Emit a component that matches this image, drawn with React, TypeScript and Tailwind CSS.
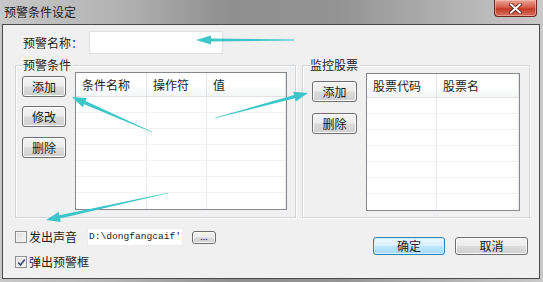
import React from "react";

const FONT = "font-['Noto_Sans_CJK_SC','Noto_Sans',sans-serif]";

function arrowPts(tx: number, ty: number, hx: number, hy: number, w0: number, w1: number, L: number, H: number) {
  const dx = hx - tx;
  const dy = hy - ty;
  const len = Math.hypot(dx, dy);
  const ux = dx / len;
  const uy = dy / len;
  const nx = -uy;
  const ny = ux;
  const bx = hx - ux * L;
  const by = hy - uy * L;
  const p = (x: number, y: number) => `${x.toFixed(1)},${y.toFixed(1)}`;
  return [
    p(tx + (nx * w0) / 2, ty + (ny * w0) / 2),
    p(bx + (nx * w1) / 2, by + (ny * w1) / 2),
    p(bx + nx * H, by + ny * H),
    p(hx, hy),
    p(bx - nx * H, by - ny * H),
    p(bx - (nx * w1) / 2, by - (ny * w1) / 2),
    p(tx - (nx * w0) / 2, ty - (ny * w0) / 2),
  ].join(" ");
}

function Btn({ children, className = "" }: { children: React.ReactNode; className?: string }) {
  return (
    <div
      className={`flex items-center justify-center rounded-[3px] border border-[#707070] bg-[linear-gradient(#f4f4f4,#ececec_48%,#dcdcdc_52%,#cfcfcf)] text-[12px] leading-none text-[#1a1a1a] shadow-[inset_0_0_0_1px_#fbfbfb] ${className}`}
    >
      {children}
    </div>
  );
}

function CheckBox({ checked }: { checked?: boolean }) {
  return (
    <div className="flex h-[12px] w-[12px] items-center justify-center border border-[#8e8f8f] bg-[linear-gradient(135deg,#dcdcdc,#f6f6f6)] shadow-[inset_0_0_0_1px_#f4f4f4]">
      {checked && (
        <svg width="9" height="9" viewBox="0 0 9 9">
          <path d="M1.2 4.6 L3.5 7 L7.8 1.5" fill="none" stroke="#3c4d78" strokeWidth="1.7" />
        </svg>
      )}
    </div>
  );
}

function Table({ cols, rows, width }: { cols: { label: string; w: number }[]; rows: number; width: number }) {
  return (
    <div className="border border-[#86898f] bg-white" style={{ width }}>
      <div className="flex h-[24px] border-b border-[#e2e2e2] bg-[linear-gradient(#ffffff,#ffffff_50%,#f4f5f6)]">
        {cols.map((c, i) => (
          <div
            key={i}
            className="flex items-center border-r border-[#e3e4e6] pl-[6px] text-[12px] text-[#1e1e1e]"
            style={{ width: c.w }}
          >
            {c.label}
          </div>
        ))}
      </div>
      {Array.from({ length: rows }).map((_, r) => (
        <div key={r} className="flex h-[16px] border-b border-[#f1f1f1] last:border-b-0">
          {cols.map((c, i) => (
            <div key={i} className="border-r border-[#ebebeb]" style={{ width: c.w }} />
          ))}
        </div>
      ))}
    </div>
  );
}

function Group({ title, className = "", children }: { title: string; className?: string; children: React.ReactNode }) {
  return (
    <div
      className={`relative h-[153px] border border-[#d3d6d9] shadow-[inset_1px_1px_0_#ffffff,1px_1px_0_#ffffff] ${className}`}
    >
      <span className="absolute -top-[9px] left-[7px] bg-[#f0f0f0] pr-[2px] text-[12px] leading-[16px] text-[#1e1e1e]">
        {title}
      </span>
      {children}
    </div>
  );
}

export default function App() {
  const teal = "#3cc6c9";
  return (
    <div
      className={`relative h-[282px] w-[543px] overflow-hidden bg-[linear-gradient(to_right,#c8c8c8,#b2b2b2_22%,#8f8f8f_42%,#939393_62%,#adadad_80%,#c9c9c9)] ${FONT}`}
    >
      {/* title bar */}
      <div className="flex h-[24px] items-start justify-between">
        <div className="pl-[4px] pt-[3px] text-[12px] leading-[17px] text-[#202020]">预警条件设定</div>
        <div className="mr-[6px] flex h-[17px] w-[43px] items-center justify-center rounded-b-[4px] border border-t-0 border-[#6a2a22] bg-[linear-gradient(#eaa597,#d65d49_45%,#c23b27_55%,#d4725e)] shadow-[inset_0_0_0_1px_rgba(255,200,190,0.5)]">
          <svg width="13" height="11" viewBox="0 0 13 11">
            <path d="M2 1.5 L11 9.5 M11 1.5 L2 9.5" stroke="#5a1c14" strokeWidth="3.6" strokeLinecap="square" />
            <path d="M2 1.5 L11 9.5 M11 1.5 L2 9.5" stroke="#ffffff" strokeWidth="2" strokeLinecap="square" />
          </svg>
        </div>
      </div>

      {/* client area */}
      <div className="ml-[2px] flex h-[255px] w-[538px] flex-col border border-[#4a4a4a] bg-[#f0f0f0] text-[12px] text-[#1e1e1e]">
        {/* name row */}
        <div className="flex items-center pl-[20px] pt-[6px]">
          <div className="w-[66px] text-[12px]">预警名称：</div>
          <div className="h-[23px] w-[134px] border border-[#e0e0e0] bg-white" />
        </div>

        {/* groups */}
        <div className="mt-[11px] flex gap-[6px] pl-[12px]">
          <Group title="预警条件" className="w-[281px]">
            <div className="flex gap-[9px] pl-[6px] pt-[6px]">
              <div className="flex flex-col pt-[4px]">
                <Btn className="h-[21px] w-[44px]">添加</Btn>
                <Btn className="mt-[9px] h-[21px] w-[44px]">修改</Btn>
                <Btn className="mt-[10px] h-[21px] w-[44px]">删除</Btn>
              </div>
              <Table
                width={212}
                rows={7}
                cols={[
                  { label: "条件名称", w: 71 },
                  { label: "操作符", w: 60 },
                  { label: "值", w: 79 },
                ]}
              />
            </div>
          </Group>
          <Group title="监控股票" className="w-[228px]">
            <div className="flex gap-[9px] pl-[9px] pt-[7px]">
              <div className="flex flex-col pt-[8px]">
                <Btn className="h-[21px] w-[45px]">添加</Btn>
                <Btn className="mt-[11px] h-[21px] w-[45px]">删除</Btn>
              </div>
              <Table
                width={154}
                rows={7}
                cols={[
                  { label: "股票代码", w: 70 },
                  { label: "股票名", w: 82 },
                ]}
              />
            </div>
          </Group>
        </div>

        {/* bottom */}
        <div className="mt-[10px] flex justify-between pl-[12px] pr-[11px]">
          <div className="flex flex-col">
            <div className="flex h-[18px] items-center">
              <CheckBox />
              <span className="ml-[2px] w-[50px]">发出声音</span>
              <div className="ml-[8px] flex h-[18px] w-[96px] items-center overflow-hidden border border-[#ececec] bg-white pl-[1px] font-['Liberation_Mono',monospace] text-[9.6px] text-[#222] whitespace-nowrap">
                D:\dongfangcaif'
              </div>
              <Btn className="ml-[9px] h-[13px] w-[24px] !text-[9px] !leading-[6px]">...</Btn>
            </div>
            <div className="mt-[7px] flex h-[18px] items-center">
              <CheckBox checked />
              <span className="ml-[2px]">弹出预警框</span>
            </div>
          </div>
          <div className="flex gap-[10px] pt-[9px]">
            <div className="flex h-[18px] w-[72px] items-center justify-center rounded-[3px] border border-[#3c7fb1] bg-[linear-gradient(#eaf6fd,#d9f0fc_48%,#bee6fd_52%,#a7d9f5)] text-[12px] leading-none shadow-[inset_0_0_0_1px_#cdeefc]">
              确定
            </div>
            <Btn className="h-[18px] w-[73px]">取消</Btn>
          </div>
        </div>
      </div>

      {/* annotation arrows */}
      <svg className="pointer-events-none absolute left-0 top-0" width="543" height="282" viewBox="0 0 543 282">
        <polygon points={arrowPts(294, 40, 196, 40, 1, 3, 15, 4.5)} fill={teal} />
        <polygon points={arrowPts(152, 132, 72, 97, 0.6, 3.4, 14, 5)} fill={teal} />
        <polygon points={arrowPts(215, 118, 308, 93, 0.6, 3.4, 14, 5)} fill={teal} />
        <polygon points={arrowPts(168, 193, 46, 220, 0.6, 3.4, 14, 5)} fill={teal} />
      </svg>
    </div>
  );
}
